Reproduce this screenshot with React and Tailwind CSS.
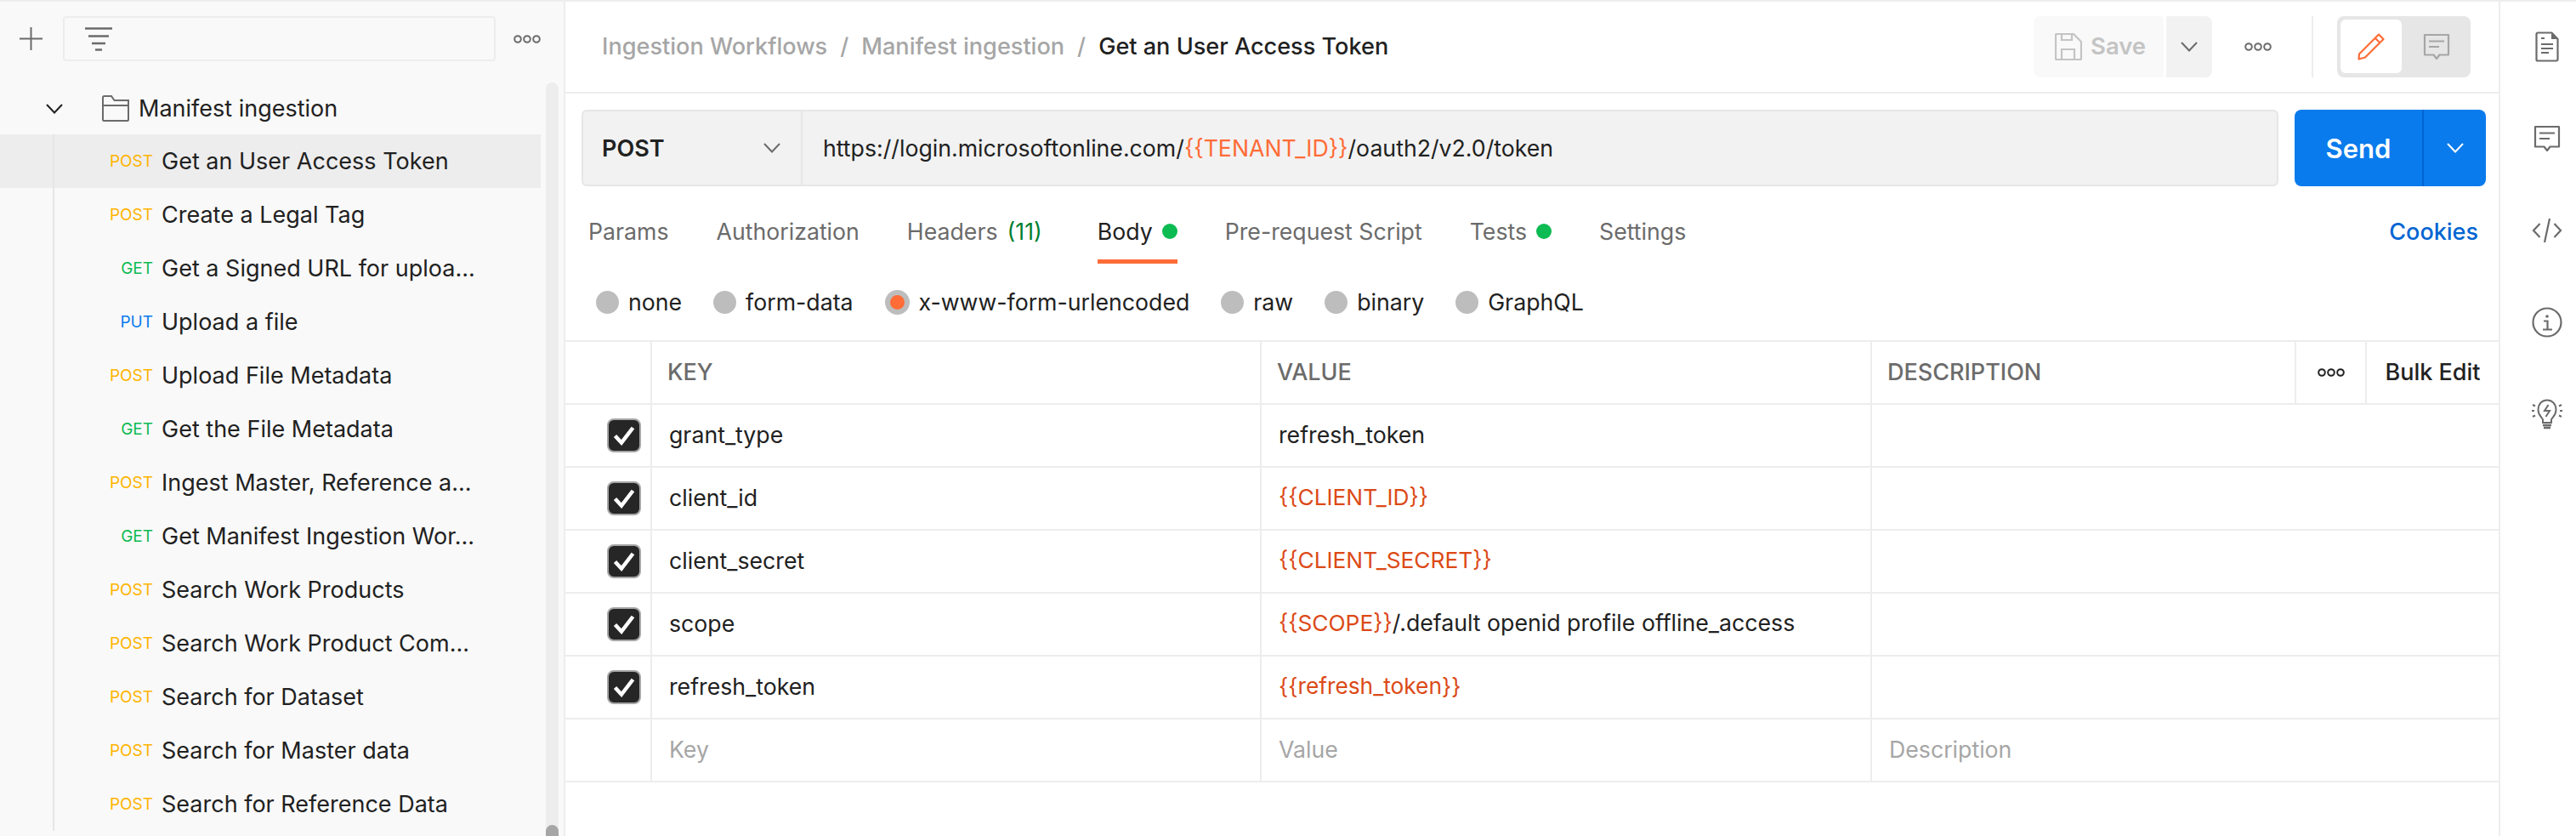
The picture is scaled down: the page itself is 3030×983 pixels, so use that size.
const requests = [
  ['POST', 'Get an User Access Token'],
  ['POST', 'Create a Legal Tag'],
  ['GET', 'Get a Signed URL for uploa...'],
  ['PUT', 'Upload a file'],
  ['POST', 'Upload File Metadata'],
  ['GET', 'Get the File Metadata'],
  ['POST', 'Ingest Master, Reference a...'],
  ['GET', 'Get Manifest Ingestion Wor...'],
  ['POST', 'Search Work Products'],
  ['POST', 'Search Work Product Com...'],
  ['POST', 'Search for Dataset'],
  ['POST', 'Search for Master data'],
  ['POST', 'Search for Reference Data'],
]

const methodColor = {
  POST: 'text-[#ffb400]',
  GET: 'text-[#0cbb52]',
  PUT: 'text-[#097bed]',
}

const Chevron = ({ className = 'stroke-[#6b6b6b]' }) => (
  <svg width="20" height="12" viewBox="0 0 20 12" fill="none" className={className} strokeWidth="2">
    <path d="M1 1l9 9.5L19 1" />
  </svg>
)

const Dots = ({ color = '#6b6b6b' }) => (
  <svg width="32" height="10" viewBox="0 0 32 10" fill="none" stroke={color} strokeWidth="2">
    <circle cx="5" cy="5" r="3.8" />
    <circle cx="16" cy="5" r="3.8" />
    <circle cx="27" cy="5" r="3.8" />
  </svg>
)

const CommentIcon = ({ color = '#6b6b6b' }) => (
  <svg width="32" height="32" viewBox="0 0 32 32" fill="none" stroke={color} strokeWidth="2.2">
    <path d="M2 2h28v23.5H19.5L16 30l-3.5-4.500H2z" strokeLinejoin="round" />
    <path d="M7 9.500h18M7 16h12" />
  </svg>
)

function Sidebar() {
  return (
    <div className="flex h-full w-[665px] shrink-0 flex-col border-r-2 border-[#ededed] bg-[#f9f9f9]">
      <div className="flex h-[95px] items-start pt-[17px]">
        <div className="ml-[23px] mt-[13px]">
          <svg width="27" height="27" viewBox="0 0 27 27" stroke="#6b6b6b" strokeWidth="2">
            <path d="M13.500 0v27M0 13.500h27" />
          </svg>
        </div>
        <div className="ml-[24px] flex h-[53px] w-[509px] items-center rounded-[4px] border-2 border-[#ededed] pl-[24px]">
          <svg width="32" height="28" viewBox="0 0 32 28" stroke="#6b6b6b" strokeWidth="2.500">
            <path d="M0 1.500h32M4 10.500h24M8 19h16M12 26.500h8" />
          </svg>
        </div>
        <div className="ml-[21px] mt-[22px]">
          <Dots />
        </div>
      </div>
      <div className="flex min-h-0 flex-1">
        <div className="w-[636px] shrink-0">
          <div className="flex h-[61px] items-center pl-[54px]">
            <Chevron className="stroke-[#212121]" />
            <svg className="ml-[46px]" width="32" height="31" viewBox="0 0 32 31" fill="none" stroke="#6b6b6b" strokeWidth="2">
              <path d="M1 29V2.500C1 1.700 1.700 1 2.500 1H11l3.500 5H31v23c0 .6-.4 1-1 1H2c-.6 0-1-.4-1-1zM1 12h30" />
            </svg>
            <span className="ml-[11px] text-[27px] leading-none text-[#212121]">Manifest ingestion</span>
          </div>
          {requests.map(([method, name], i) => (
            <div key={name} className={i === 0 ? 'h-[63px] bg-[#ededed]' : 'h-[63px]'}>
              <div className="ml-[62px] flex h-full items-center border-l-2 border-[#e6e6e6]">
                <span className={`w-[116px] shrink-0 text-right text-[19px] leading-none ${methodColor[method]}`}>{method}</span>
                <span className="ml-[10px] whitespace-nowrap text-[27px] leading-none text-[#212121]">{name}</span>
              </div>
            </div>
          ))}
        </div>
        <div className="ml-[6px] flex w-[15px] flex-col justify-end rounded-t-full bg-[#ededed]">
          <div className="h-[13px] rounded-t-full bg-[#a6a6a6]" />
        </div>
      </div>
    </div>
  )
}

function Header() {
  return (
    <div className="flex h-[108px] shrink-0 items-center border-b-2 border-[#ededed] pl-[43px] pr-[33px] pb-[1px]">
      <div className="flex items-center text-[27.1px] font-medium leading-none text-[#a6a6a6]">
        <span>Ingestion Workflows</span>
        <span className="mx-[15px]">/</span>
        <span>Manifest ingestion</span>
        <span className="mx-[15px]">/</span>
        <span className="text-[#212121]">Get an User Access Token</span>
      </div>
      <div className="ml-auto flex h-[72px] items-center">
        <div className="flex h-full w-[153px] items-center rounded-l-[8px] rounded-r-[4px] bg-[#f9f9f9] pl-[25px]">
          <svg width="32" height="32" viewBox="0 0 32 32" fill="none" stroke="#c4c4c4" strokeWidth="2.200">
            <path d="M1 2a1 1 0 0 1 1-1h20l9 9v20a1 1 0 0 1-1 1H2a1 1 0 0 1-1-1zM8 1v7h12V1M8 31V19h15v12" />
          </svg>
          <span className="ml-[10px] text-[27.500px] font-semibold leading-none text-[#c4c4c4]">Save</span>
        </div>
        <div className="ml-[3px] flex h-full w-[54px] items-center justify-center rounded-r-[8px] bg-[#f2f2f2]">
          <Chevron />
        </div>
        <div className="ml-[38px]">
          <Dots />
        </div>
        <div className="ml-[47px] h-full w-[2px] bg-[#ededed]" />
        <div className="ml-[28px] flex h-full w-[157px] items-center rounded-[8px] bg-[#e6e6e6] pl-[4px]">
          <div className="flex h-[63px] w-[72px] items-center justify-center rounded-[6px] bg-white">
            <svg width="32" height="32" viewBox="0 0 32 32" fill="none" stroke="#ff6c37" strokeWidth="2.200" strokeLinejoin="round">
              <path d="M25 1.500l5.500 5.500L9 28.500 1.500 30.500 2 24.500zM21 6l5.500 5.500" />
            </svg>
          </div>
          <div className="flex flex-1 items-center justify-center">
            <CommentIcon color="#a6a6a6" />
          </div>
        </div>
      </div>
    </div>
  )
}

function UrlBar() {
  return (
    <div className="flex h-[90px] gap-[19px] pl-[19px] pr-[15px] mt-[19px] shrink-0">
      <div className="flex flex-1 rounded-[6px] border-2 border-[#e6e6e6] bg-[#f2f2f2]">
        <div className="flex w-[258px] items-center border-r-2 border-[#e6e6e6] pl-[22px]">
          <span className="text-[27px] font-semibold leading-none text-[#212121]">POST</span>
          <span className="ml-auto mr-[24px]">
            <Chevron />
          </span>
        </div>
        <div className="flex items-center pl-[24px] text-[26.7px] leading-none text-[#212121]">
          https://login.microsoftonline.com/<span className="text-[#ff6c37]">{'{{TENANT_ID}}'}</span>/oauth2/v2.0/token
        </div>
      </div>
      <div className="flex w-[225px] rounded-[8px] bg-[#097bed]">
        <div className="flex w-[152px] items-center justify-center border-r-2 border-[#0265d2] text-[31px] font-semibold leading-none text-white">
          Send
        </div>
        <div className="flex flex-1 items-center justify-center">
          <Chevron className="stroke-white" />
        </div>
      </div>
    </div>
  )
}

const Dot = () => <span className="ml-[11px] h-[18px] w-[18px] rounded-full bg-[#0cbb52]" />

function Tabs() {
  const tab = 'flex h-full items-center pt-[15px] text-[26.7px] leading-none text-[#6b6b6b]'
  return (
    <div className="flex h-[91px] shrink-0 items-center gap-[56px] pl-[27px] pr-[24px]">
      <span className={tab}>Params</span>
      <span className={tab}>Authorization</span>
      <span className={tab}>
        Headers<span className="ml-[11px] mr-[9px] text-[#007f31]">(11)</span>
      </span>
      <span className="flex h-full items-center border-b-[5px] border-[#ff6c37] pt-[20px] text-[26.7px] leading-none text-[#212121]">
        Body
        <Dot />
      </span>
      <span className={tab}>Pre-request Script</span>
      <span className={tab}>
        Tests
        <Dot />
      </span>
      <span className={tab}>Settings</span>
      <span className="ml-auto flex h-full items-center pt-[15px] text-[27px] font-medium leading-none text-[#0265d2]">Cookies</span>
    </div>
  )
}

function Radios() {
  const options = ['none', 'form-data', 'x-www-form-urlencoded', 'raw', 'binary', 'GraphQL']
  return (
    <div className="flex h-[90px] shrink-0 items-center gap-[37px] pl-[36px]">
      {options.map((o) => (
        <div key={o} className="flex items-center gap-[11px]">
          {o === 'x-www-form-urlencoded' ? (
            <span className="flex h-[29px] w-[29px] items-center justify-center rounded-full bg-[#bdbdbd]">
              <span className="h-[17px] w-[17px] rounded-full bg-[#ff6c37]" />
            </span>
          ) : (
            <span className="h-[27px] w-[27px] rounded-full bg-[#bdbdbd]" />
          )}
          <span className="text-[26.7px] leading-none text-[#212121]">{o}</span>
        </div>
      ))}
    </div>
  )
}

const Var = ({ children }) => <span className="text-[26.3px] text-[#dc4a17]">{children}</span>

const rows = [
  ['grant_type', 'refresh_token'],
  ['client_id', <Var>{'{{CLIENT_ID}}'}</Var>],
  ['client_secret', <Var>{'{{CLIENT_SECRET}}'}</Var>],
  ['scope', <span key="s"><Var>{'{{SCOPE}}'}</Var>/.default openid profile offline_access</span>],
  ['refresh_token', <Var>{'{{refresh_token}}'}</Var>],
]

function Checkbox() {
  return (
    <span className="flex h-[40px] w-[40px] items-center justify-center rounded-[8px] border-2 border-[#a6a6a6] bg-[#262626]">
      <svg width="26" height="24" viewBox="0 0 26 24" fill="none" stroke="white" strokeWidth="4.500">
        <path d="M2.500 12.500l7.500 8L23.500 3" />
      </svg>
    </span>
  )
}

function Row({ check, keyCell, value, desc, muted }) {
  const text = muted ? 'text-[#a6a6a6]' : 'text-[#212121]'
  return (
    <div className="flex h-[74px] border-b-2 border-[#ededed] text-[26.7px] leading-none">
      <div className="flex w-[100px] shrink-0 items-center justify-end pr-[11px]">{check && <Checkbox />}</div>
      <div className={`flex w-[717px] shrink-0 items-center border-l-2 border-[#ededed] pb-[2px] pl-[20px] ${text}`}>{keyCell}</div>
      <div className={`flex w-[718px] shrink-0 items-center border-l-2 border-[#ededed] pb-[2px] pl-[20px] ${text}`}>{value}</div>
      <div className={`flex flex-1 items-center border-l-2 border-[#ededed] pb-[2px] pl-[20px] ${text}`}>{desc}</div>
    </div>
  )
}

function Table() {
  const head = 'flex shrink-0 items-center border-l-2 border-[#ededed] pb-[2px] pl-[18px] font-medium text-[#6b6b6b]'
  return (
    <div className="border-t-2 border-[#ededed]">
      <div className="flex h-[74px] border-b-2 border-[#ededed] text-[27px] leading-none">
        <div className="w-[100px] shrink-0" />
        <div className={`${head} w-[717px]`}>KEY</div>
        <div className={`${head} w-[718px]`}>VALUE</div>
        <div className={`${head} w-[499px]`}>DESCRIPTION</div>
        <div className="flex w-[83px] shrink-0 items-center justify-center border-l-2 border-[#ededed]">
          <Dots color="#212121" />
        </div>
        <div className="flex flex-1 items-center justify-center border-l-2 border-[#ededed] pb-[2px] font-medium text-[#212121]">Bulk Edit</div>
      </div>
      {rows.map(([k, v]) => (
        <Row key={k} check keyCell={k} value={v} />
      ))}
      <Row keyCell="Key" value="Value" desc="Description" muted />
    </div>
  )
}

function RightRail() {
  const stroke = { fill: 'none', stroke: '#6b6b6b', strokeWidth: 2.2 }
  return (
    <div className="flex h-full flex-1 flex-col items-center gap-[68px] pl-[20px] pt-[33px]">
      <span className="flex h-[40px] items-center">
        <svg width="28" height="36" viewBox="0 0 28 36" {...stroke}>
          <path d="M1.500 3a1.500 1.500 0 0 1 1.500-1.500h16.500L26.500 9v24a1.500 1.500 0 0 1-1.500 1.500H3A1.500 1.500 0 0 1 1.500 33z" />
          <path d="M19 1.500L26.500 9H19z" fill="#6b6b6b" stroke="none" />
          <path d="M7 8h4M7 15h14M7 20h14M7 25h9" strokeWidth="2" />
        </svg>
      </span>
      <span className="flex h-[40px] items-center">
        <CommentIcon />
      </span>
      <span className="flex h-[40px] items-center">
        <svg width="36" height="30" viewBox="0 0 36 30" {...stroke}>
          <path d="M9.500 7L2 15l7.500 8M26.500 7L34 15l-7.500 8M21 1l-6 28" />
        </svg>
      </span>
      <span className="flex h-[40px] items-center">
        <svg width="36" height="36" viewBox="0 0 36 36" {...stroke}>
          <circle cx="18" cy="18" r="16.500" />
          <circle cx="18" cy="11" r="1.800" fill="#6b6b6b" stroke="none" />
          <path d="M14 16.500h4.500V26M13 26.500h11" />
        </svg>
      </span>
      <span className="flex h-[40px] items-center">
        <svg width="36" height="36" viewBox="0 0 36 36" {...stroke} strokeWidth="2">
          <path d="M13 28v-3.500c0-2-5.500-4.500-5.500-11.500C7.500 6 12 1.500 18 1.500S28.500 6 28.500 13c0 7-5.500 9.500-5.500 11.500V28z" />
          <path d="M19.500 7l-4.500 7h6l-4.500 7" />
          <path d="M13 31h10M14 34h8" strokeWidth="2.500" />
          <path d="M1 7l3 1.500M0 14h3M1 21l3-1.500M35 7l-3 1.500M36 14h-3M35 21l-3-1.500" />
        </svg>
      </span>
    </div>
  )
}

export default function App() {
  return (
    <div className="flex h-[983px] w-[3030px] overflow-hidden border-t-2 border-[#ededed] bg-white font-['Inter',sans-serif]">
      <Sidebar />
      <div className="flex h-full w-[2276px] shrink-0 flex-col border-r-2 border-[#ededed]">
        <Header />
        <UrlBar />
        <Tabs />
        <Radios />
        <Table />
      </div>
      <RightRail />
    </div>
  )
}
